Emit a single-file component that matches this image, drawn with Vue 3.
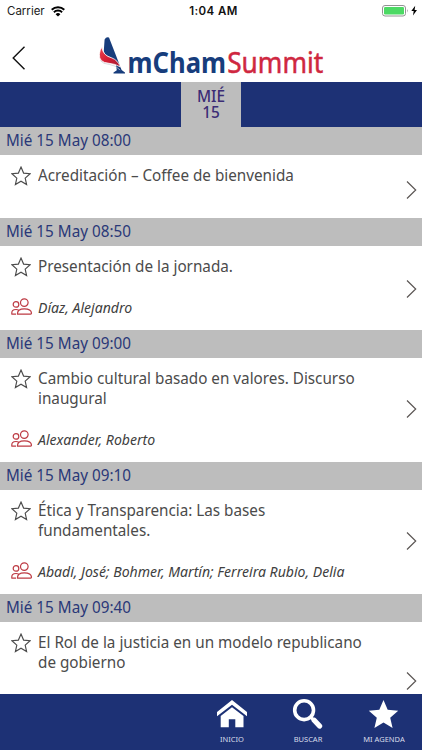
<script setup>
const sessions = [
  { time: 'Mié 15 May 08:00', lines: ['Acreditación – Coffee de bienvenida'], size: 'bare' },
  { time: 'Mié 15 May 08:50', lines: ['Presentación de la jornada.'], speakers: 'Díaz, Alejandro', size: 'single' },
  { time: 'Mié 15 May 09:00', lines: ['Cambio cultural basado en valores. Discurso', 'inaugural'], speakers: 'Alexander, Roberto', size: 'double' },
  { time: 'Mié 15 May 09:10', lines: ['Ética y Transparencia: Las bases', 'fundamentales.'], speakers: 'Abadi, José; Bohmer, Martín; Ferreira Rubio, Delia', size: 'double' },
  { time: 'Mié 15 May 09:40', lines: ['El Rol de la justicia en un modelo republicano', 'de gobierno'], size: 'last' },
]
</script>

<template>
  <div class="screen">
    <div class="status">
      <div class="carrier">
        <span>Carrier</span>
        <svg class="wifi" viewBox="0 0 14 11" width="14" height="11">
          <path d="M.7 3.8a9 9 0 0 1 12.6 0M2.9 6.2a5.9 5.9 0 0 1 8.2 0" fill="none" stroke="#000" stroke-width="1.9" />
          <path d="M7 10.6 4.6 8.2a3.4 3.4 0 0 1 4.8 0z" />
        </svg>
      </div>
      <div class="clock">1:04 AM</div>
      <svg class="battery" viewBox="0 0 38 12" width="38" height="12">
        <rect x=".5" y=".5" width="23" height="10.5" rx="2.5" fill="#fff" stroke="#939393" />
        <rect x="2" y="2" width="20" height="7.5" rx="1.2" fill="#4cd964" />
        <path d="M25 4q1.5 1.7 0 3.5z" fill="#939393" />
        <path d="M33.2.8 29.3 6h2.4L31 10.6l4-5.5h-2.4z" fill="#000" />
      </svg>
    </div>

    <header class="brand">
      <svg class="back" viewBox="0 0 14 24" width="14" height="24"><path d="M12.5.8 1.2 12l11.3 11.2" fill="none" stroke="#111" stroke-width="1.4" /></svg>
      <svg class="logo" viewBox="0 0 230 45" width="230" height="45">
        <defs>
          <linearGradient id="sail" x1="0" y1="0" x2="1" y2="1">
            <stop offset="0" stop-color="#ec4651" /><stop offset=".5" stop-color="#d51c32" /><stop offset="1" stop-color="#9f1c36" />
          </linearGradient>
        </defs>
        <path d="M7.6 3.6Q9.3.4 12 1.6L24.6 34l3.4 2.4v1H16.5v-1l3.3-2.2-1-6Q17 22.3 7.8 18.5L6.8 15z" fill="#173d7c" />
        <path d="M5 11Q5.5 19.5 15 22q5.5 2 8.6 9-5.8-3.3-11.6-3.7Q1.7 26.5 2.4 18.2q.3-4.2 2.6-7.2z" fill="url(#sail)" stroke="#fff" stroke-width=".8" />
        <path d="M3.4 24.5q2.5 3.6 8.8 3.9 6.3.7 11 5.6" fill="none" stroke="#c9ccd2" stroke-width=".7" />
        <text class="mcham" x="30.5" y="37.4" textLength="98.5" lengthAdjust="spacingAndGlyphs">mCham</text>
        <text class="summit" x="130.2" y="37.4" textLength="96" lengthAdjust="spacingAndGlyphs">Summit</text>
      </svg>
    </header>

    <div class="days"><div class="day"><span>MIÉ</span><span>15</span></div></div>

    <main class="agenda">
      <section v-for="s in sessions" :key="s.time">
        <h2><span>{{ s.time }}</span></h2>
        <article :class="s.size">
          <svg class="star" viewBox="0 0 20 20" width="20" height="20">
            <path d="M10 1.1l2.6 6 6.5.6-4.9 4.4 1.4 6.5L10 15.2l-5.6 3.4 1.4-6.5L.9 7.7l6.5-.6z" fill="none" stroke="#4c4c4c" stroke-width="1.15" />
          </svg>
          <div class="title"><span v-for="l in s.lines" :key="l">{{ l }}</span></div>
          <svg class="chevron" viewBox="0 0 11 20" width="11" height="20"><path d="M1 1.5 9.7 10 1 18.5" fill="none" stroke="#5b5654" stroke-width="1.2" /></svg>
          <template v-if="s.speakers">
            <svg class="people" viewBox="0 0 22 17" width="22" height="17" fill="none" stroke="#bd3a43" stroke-width="1.2">
              <circle cx="13.3" cy="4.6" r="3.8" />
              <circle cx="5" cy="6.4" r="2.8" />
              <path d="M6.6 16.1q-.6-5.2 6.8-5.2 6.8 0 7.1 4.2 0 1-.9 1zM5.1 16.1H.9q-.8-4.6 4.2-4.6 1.4 0 2.4.6" />
            </svg>
            <div class="names"><span>{{ s.speakers }}</span></div>
          </template>
        </article>
      </section>
    </main>

    <nav>
      <div class="tab">
        <svg viewBox="0 0 32 30" width="32" height="30" fill="#fff">
          <path d="M16 1 31 13v4.3L16 5.8 1 17.3V13zM16 8.3 27.5 17v11.2h-8.2v-8h-6.5v8H4.7V17z" />
        </svg>
        <span>INICIO</span>
      </div>
      <div class="tab">
        <svg viewBox="0 0 32 30" width="32" height="30" fill="none" stroke="#fff">
          <circle cx="12.1" cy="11.2" r="9.4" stroke-width="3.6" />
          <path d="m18.5 17.8 3.5 3.5" stroke-width="3.2" />
          <path d="m22.2 21.2 5.4 5.8" stroke-width="5.2" stroke-linecap="round" />
        </svg>
        <span>BUSCAR</span>
      </div>
      <div class="tab">
        <svg viewBox="0 0 32 30" width="32" height="30" fill="#fff">
          <path d="m15.5 1 4.2 9.8 10.5 1-8 6.9 2.4 10.4-9.1-5.5-9.1 5.5 2.4-10.4-8-6.9 10.5-1z" />
        </svg>
        <span>MI AGENDA</span>
      </div>
    </nav>
  </div>
</template>

<style>
body { margin: 0; background: #fff; }
</style>

<style scoped>
* { box-sizing: border-box; }
svg { display: block; flex: none; }
.screen { width: 422px; height: 750px; display: flex; flex-direction: column; overflow: hidden; background: #fff; font-family: "Noto Sans", sans-serif; }
.status { height: 22px; flex: none; display: grid; grid-template-columns: 1fr auto 1fr; align-items: center; padding: 0 2px 0 7px; font: 11.5px/22px Inter, sans-serif; color: #222; }
.carrier { display: flex; align-items: center; gap: 6px; }
.clock { font-weight: 600; color: #111; letter-spacing: .4px; }
.battery { justify-self: end; }
.brand { height: 59.5px; flex: none; display: flex; align-items: flex-start; padding: 14px 0 0 12px; }
.back { margin-top: 10px; }
.logo { margin-left: 71px; overflow: visible; }
.mcham { font: 700 28.5px "Noto Sans", sans-serif; fill: #173d7c; }
.summit { font: 400 29px "Noto Sans", sans-serif; fill: #cf2740; stroke: #cf2740; stroke-width: .5px; }
.days { height: 45.5px; flex: none; background: #1d3175; display: flex; justify-content: center; }
.day { width: 60px; background: #bdbdbd; color: #3b2c75; font-weight: 500; font-size: 15.4px; line-height: 16.5px; padding-top: 7.4px; display: flex; flex-direction: column; align-items: center; }
.agenda { flex: 1; min-height: 0; overflow: hidden; }
h2 { margin: 0; height: 28px; padding-left: 6px; background: #bdbdbd; color: #2a3878; font-weight: 400; font-size: 16.5px; line-height: 26.5px; }
h2 span { display: inline-block; transform: scaleX(.925); transform-origin: 0 50%; }
article { display: grid; grid-template-columns: 27px 1fr 11px; grid-template-rows: 1fr auto; padding: 10px 5px 0 11px; color: #4b4b4b; }
.bare { height: 63px; }
.single { height: 84px; }
.double { height: 104px; }
.last { height: 118px; }
.title { font-size: 16px; line-height: 20.3px; white-space: nowrap; }
.title span { display: block; transform: scaleX(.953); transform-origin: 0 50%; }
.star { margin-top: .5px; }
.chevron { grid-column: 3; grid-row: 1 / 3; align-self: center; margin-top: -12px; }
.bare .chevron { margin-top: -3px; }
.single .chevron { margin-top: -8px; }
.last .chevron { margin-top: -10px; }
.people { grid-row: 2; grid-column: 1; margin-top: 1px; }
.names { grid-row: 2; grid-column: 2; height: 33px; font-size: 14px; font-style: italic; line-height: 22px; white-space: nowrap; color: #404040; }
.names span { display: inline-block; transform: scaleX(1.005); transform-origin: 0 50%; }
nav { height: 56px; flex: none; background: #1d3175; display: flex; justify-content: flex-end; }
.tab { width: 76px; display: flex; flex-direction: column; align-items: center; padding-top: 5px; color: #d8dcea; font-size: 7.5px; line-height: 11px; gap: 5px; white-space: nowrap; }
</style>
